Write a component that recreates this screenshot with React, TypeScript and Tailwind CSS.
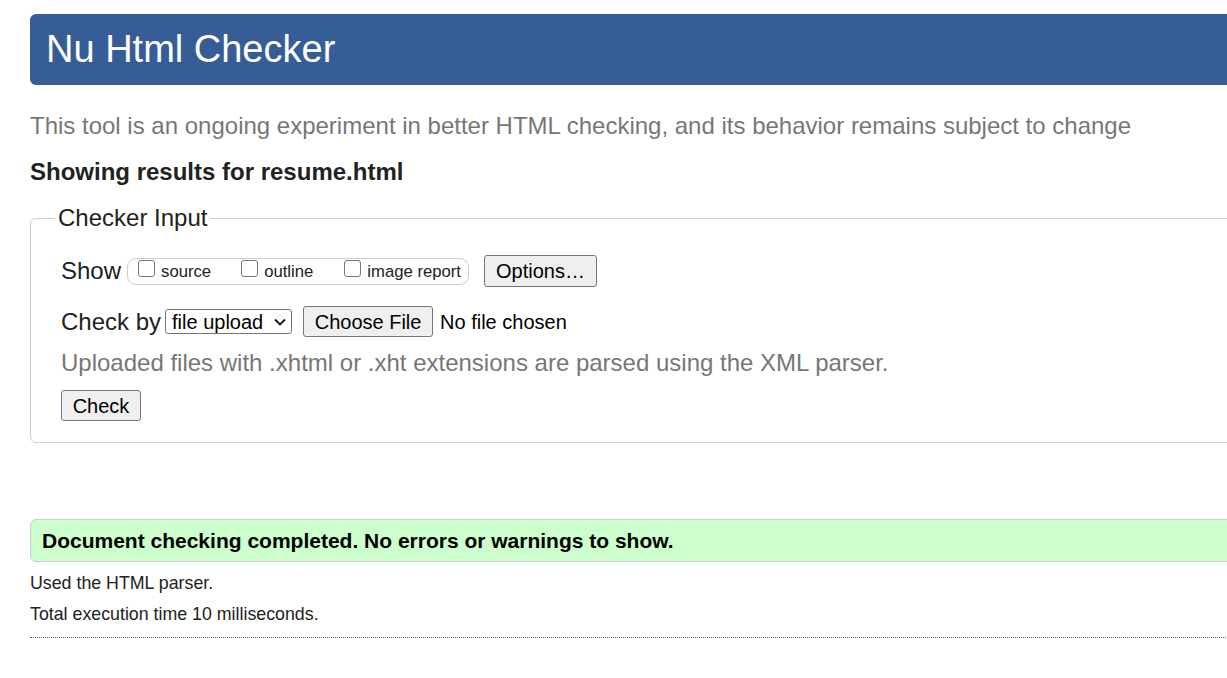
export default function App() {
  return (
    <div className="w-full h-[678px] overflow-hidden bg-white">
      <div className="w-[1260px] pt-[14px] pl-[30px] font-['Liberation_Sans',Arial,sans-serif] text-[#222]">
        <h1 className="h-[71px] rounded-md bg-[#365d95] text-white text-[38px] pl-[16px] flex items-center">
          Nu Html Checker
        </h1>

        <p className="mt-[27px] text-[24px] leading-[28px] text-[#777]">
          This tool is an ongoing experiment in better HTML checking, and its behavior remains subject to change
        </p>

        <h2 className="mt-[18px] text-[24px] leading-[28px] font-bold">Showing results for resume.html</h2>

        <fieldset className="mt-[18px] border border-[#ccc] rounded-md pl-[30px] pb-[21px]">
          <legend className="-ml-[6px] px-[3px] text-[24px] leading-[28px]">Checker Input</legend>

          <div className="mt-[23px] flex items-center h-[32px]">
            <span className="text-[24px] leading-[28px]">Show</span>
            <div className="ml-[6px] h-[27px] border border-[#ccc] rounded-[9px] pl-[10px] pr-[7px] flex items-start pt-[1px] text-[16.7px]">
              <span className="w-[17px] h-[17px] border border-[#767676] rounded-[3px] bg-white"></span>
              <span className="ml-[6px] mt-[3px] leading-[18px]">source</span>
              <span className="ml-[30px] w-[17px] h-[17px] border border-[#767676] rounded-[3px] bg-white"></span>
              <span className="ml-[6px] mt-[3px] leading-[18px]">outline</span>
              <span className="ml-[31px] w-[17px] h-[17px] border border-[#767676] rounded-[3px] bg-white"></span>
              <span className="ml-[6px] mt-[3px] leading-[18px]">image report</span>
            </div>
            <button className="ml-[15px] h-[32px] w-[113px] bg-[#efefef] border border-[#767676] rounded-[3px] text-[20px] text-black">
              Options…
            </button>
          </div>

          <div className="mt-[19px] flex items-center h-[31px]">
            <span className="text-[24px] leading-[28px]">Check by</span>
            <div className="ml-[4px] h-[25px] w-[127px] border border-[#767676] rounded-[3px] flex items-center pl-[6px] pr-[4px] text-[20px] text-black">
              <span className="leading-[22px]">file upload</span>
              <svg className="ml-auto" width="14" height="10" viewBox="0 0 14 10" fill="none">
                <path d="M2 2.5 L7 7.5 L12 2.5" stroke="#111" strokeWidth="1.8" />
              </svg>
            </div>
            <button className="ml-[11px] h-[31px] w-[130px] bg-[#efefef] border border-[#767676] rounded-[3px] text-[20px] text-black">
              Choose File
            </button>
            <span className="ml-[7px] text-[20px] text-black">No file chosen</span>
          </div>

          <p className="mt-[12px] text-[24px] leading-[28px] text-[#777]">
            Uploaded files with .xhtml or .xht extensions are parsed using the XML parser.
          </p>

          <button className="mt-[13px] h-[31px] w-[80px] bg-[#efefef] border border-[#767676] rounded-[3px] text-[20px] text-black">
            Check
          </button>
        </fieldset>

        <div className="mt-[76px] h-[43px] bg-[#ccffcc] border border-[#ccc] rounded-md pl-[11px] flex items-center">
          <span className="text-[21px] font-bold text-black">Document checking completed. No errors or warnings to show.</span>
        </div>

        <p className="mt-[11px] text-[17.8px] leading-[20px]">Used the HTML parser.</p>
        <p className="mt-[11px] text-[17.8px] leading-[20px]">Total execution time 10 milliseconds.</p>
        <div className="mt-[13px] border-t border-dotted border-[#666]"></div>
      </div>
    </div>
  )
}
